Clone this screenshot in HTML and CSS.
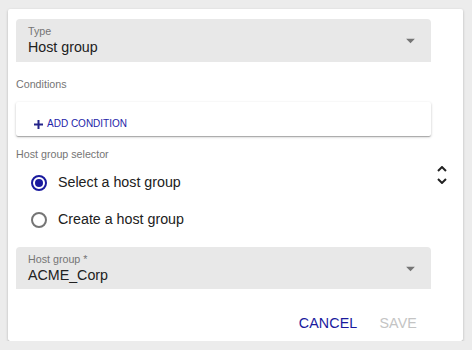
FILE: index.html
```html
<!DOCTYPE html>
<html lang="en">
  <head>
    <meta charset="UTF-8" />
    <meta name="viewport" content="width=device-width, initial-scale=1.0" />
    <title>Host group</title>
    <link rel="stylesheet" href="styles.css">
  </head>
  <body>
    <div class="dialog">
      <div class="select-field">
        <div class="select-content">
          <span class="select-label">Type</span>
          <span class="select-value">Host group</span>
        </div>
        <svg class="select-arrow" viewBox="0 0 24 24" width="21" height="21">
          <path d="M7 10l5 5 5-5z" />
        </svg>
      </div>

      <div class="section-label conditions-label">Conditions</div>
      <div class="conditions-paper">
        <button class="add-button">
          <svg class="plus-icon" viewBox="0 0 9 9" width="9" height="9">
            <path d="M4.5 0v9M0 4.5h9" />
          </svg>
          ADD CONDITION
        </button>
      </div>

      <div class="section-label selector-label">Host group selector</div>
      <div class="selector-row">
        <div class="radio-group">
          <label class="radio-row">
            <span class="radio checked"></span>
            <span class="radio-text">Select a host group</span>
          </label>
          <label class="radio-row">
            <span class="radio"></span>
            <span class="radio-text">Create a host group</span>
          </label>
        </div>
        <svg class="sort-toggle" viewBox="0 0 10 18" width="10" height="18">
          <path d="M1 5l4-4 4 4M1 13l4 4 4-4" />
        </svg>
      </div>

      <div class="select-field host-select">
        <div class="select-content">
          <span class="select-label">Host group *</span>
          <span class="select-value">ACME_Corp</span>
        </div>
        <svg class="select-arrow" viewBox="0 0 24 24" width="21" height="21">
          <path d="M7 10l5 5 5-5z" />
        </svg>
      </div>

      <div class="actions">
        <button class="text-button primary">CANCEL</button>
        <button class="text-button" disabled>SAVE</button>
      </div>
    </div>
  </body>
</html>
```

FILE: styles.css
```css
* {
  margin: 0;
  padding: 0;
  box-sizing: border-box;
}

body {
  background: #ececec;
  font-family: "Liberation Sans", Arial, sans-serif;
  color: #212121;
  padding: 9px 0 0 8px;
}

.dialog {
  width: 455px;
  height: 332px;
  background: #fff;
  border-radius: 2px;
  padding: 10px 16px 0 8px;
  box-shadow: 0 1px 3px rgba(0, 0, 0, 0.2), 0 1px 1px rgba(0, 0, 0, 0.14),
    0 2px 1px -1px rgba(0, 0, 0, 0.12);
}

.select-field {
  width: 415px;
  height: 43px;
  background: #e8e8e8;
  border-radius: 4px 4px 0 0;
  display: flex;
  align-items: center;
  padding: 0 10px 0 12px;
}

.host-select {
  height: 42px;
  margin-top: 9px;
}

.select-content {
  flex: 1;
  display: flex;
  flex-direction: column;
  gap: 2px;
}

.select-label {
  font-size: 10.7px;
  line-height: 12px;
  color: #757575;
}

.select-value {
  font-size: 14.25px;
  line-height: 17px;
  color: #212121;
}

.select-arrow {
  fill: #757575;
}

.section-label {
  font-size: 10.7px;
  line-height: 12px;
  color: #757575;
}

.conditions-label {
  margin-top: 16px;
}

.conditions-paper {
  width: 415px;
  height: 34px;
  margin-top: 12px;
  padding: 14px 0 0 18px;
  background: #fff;
  border-radius: 2px;
  box-shadow: 0 1px 3px rgba(0, 0, 0, 0.2), 0 1px 1px rgba(0, 0, 0, 0.14),
    0 2px 1px -1px rgba(0, 0, 0, 0.12);
}

.add-button {
  display: flex;
  align-items: center;
  gap: 4px;
  border: none;
  background: none;
  font-family: inherit;
  font-size: 10px;
  line-height: 16px;
  color: #2323a8;
}

.plus-icon {
  stroke: #24248a;
  stroke-width: 2;
}

.selector-label {
  margin-top: 12px;
}

.selector-row {
  display: flex;
  margin-top: 4px;
}

.radio-group {
  width: 415px;
  display: flex;
  flex-direction: column;
}

.radio-row {
  height: 37px;
  display: flex;
  align-items: center;
  gap: 11px;
  padding-left: 15px;
}

.radio {
  width: 16px;
  height: 16px;
  border: 2px solid #757575;
  border-radius: 50%;
  display: flex;
  align-items: center;
  justify-content: center;
}

.radio.checked {
  border-color: #1a1a9e;
}

.radio.checked::after {
  content: "";
  width: 8px;
  height: 8px;
  border-radius: 50%;
  background: #1a1a9e;
}

.radio-text {
  font-size: 14.25px;
  line-height: 17px;
}

.sort-toggle {
  margin: 2px 0 0 7px;
  fill: none;
  stroke: #222;
  stroke-width: 2;
}

.actions {
  display: flex;
  justify-content: flex-end;
  gap: 6px;
  margin: 16px 22px 0 0;
}

.text-button {
  height: 36px;
  padding: 0 8px;
  border: none;
  background: none;
  font-family: inherit;
  font-size: 14.25px;
  line-height: 36px;
  letter-spacing: 0.15px;
  color: #c4c4c4;
}

.text-button.primary {
  color: #1a1a9e;
}
```
